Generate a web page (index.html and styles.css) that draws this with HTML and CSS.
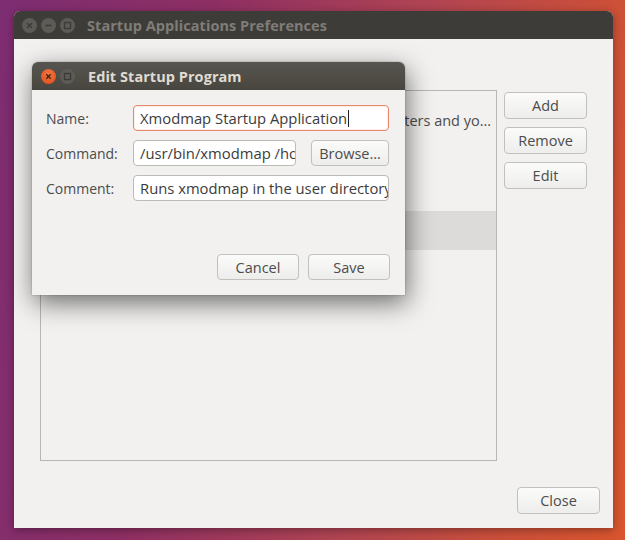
FILE: index.html
```html
<!DOCTYPE html>
<html>
<head>
<meta charset="utf-8">
<link rel="stylesheet" href="styles.css">
</head>
<body>
<div class="desktop">
  <div class="window main-win">
    <div class="titlebar">
      <div class="wbtns">
        <span class="wbtn inactive"><svg width="15" height="15" viewBox="0 0 15 15"><path d="M5 5 L10 10 M10 5 L5 10" stroke="#3b3a36" stroke-width="1.3"/></svg></span>
        <span class="wbtn inactive"><svg width="15" height="15" viewBox="0 0 15 15"><path d="M4.5 7.5 H10.5" stroke="#3b3a36" stroke-width="1.3"/></svg></span>
        <span class="wbtn inactive"><svg width="15" height="15" viewBox="0 0 15 15"><rect x="4.5" y="4.5" width="6" height="6" fill="none" stroke="#3b3a36" stroke-width="1.3"/></svg></span>
      </div>
      <div class="title inactive-title">Startup Applications Preferences</div>
    </div>
    <div class="main-body">
      <div class="top-area">
        <div class="list">
          <div class="row row-first"><span class="row-text">Runs xmodmap in the user directory to remap keyboard characters and yo…</span></div>
          <div class="row row-empty"></div>
          <div class="row row-selected"></div>
        </div>
        <div class="side-btns">
          <button class="btn side-btn">Add</button>
          <button class="btn side-btn">Remove</button>
          <button class="btn side-btn">Edit</button>
        </div>
      </div>
      <div class="bottom-area">
        <button class="btn close-btn">Close</button>
      </div>
    </div>
  </div>

  <div class="window dialog">
    <div class="titlebar dlg-titlebar">
      <div class="wbtns">
        <span class="wbtn close-active"><svg width="15" height="15" viewBox="0 0 15 15"><path d="M5.3 5.3 L9.7 9.7 M9.7 5.3 L5.3 9.7" stroke="#3b2116" stroke-width="1.3"/></svg></span>
        <span class="wbtn grey"><svg width="15" height="15" viewBox="0 0 15 15"><rect x="4.5" y="4.5" width="6" height="6" fill="none" stroke="#3b3a36" stroke-width="1.3"/></svg></span>
      </div>
      <div class="title active-title">Edit Startup Program</div>
    </div>
    <div class="dlg-body">
      <div class="form">
        <label class="lbl">Name:</label>
        <div class="entry focused">Xmodmap Startup Application<span class="caret"></span></div>
        <label class="lbl">Command:</label>
        <div class="cmd-row">
          <div class="entry cmd-entry">/usr/bin/xmodmap /home/user/.Xmodmap</div>
          <button class="btn browse-btn">Browse…</button>
        </div>
        <label class="lbl">Comment:</label>
        <div class="entry">Runs xmodmap in the user directory</div>
      </div>
      <div class="dlg-actions">
        <button class="btn act-btn">Cancel</button>
        <button class="btn act-btn">Save</button>
      </div>
    </div>
  </div>
</div>
</body>
</html>
```
FILE: styles.css
```css
* { box-sizing: border-box; }
html, body { margin: 0; padding: 0; }
body {
  width: 625px;
  height: 540px;
  overflow: hidden;
  font-family: "Open Sans", "Noto Sans", sans-serif;
  font-size: 14px;
  color: #4c4c4c;
}
.desktop {
  position: relative;
  width: 625px;
  height: 540px;
  background: linear-gradient(100deg, #7d2d72 0%, #8e2f64 30%, #b04452 60%, #cc5038 85%, #d9552e 100%);
}
.window {
  position: absolute;
  background: #f2f1f0;
  border-radius: 6px 6px 0 0;
  overflow: hidden;
}
.main-win {
  left: 14px;
  top: 11px;
  width: 599px;
  height: 517px;
  display: flex;
  flex-direction: column;
  box-shadow: 0 2px 8px rgba(0,0,0,0.35);
}
.titlebar {
  height: 28px;
  flex: none;
  background: #3d3c38;
  display: flex;
  align-items: center;
}
.wbtns {
  display: flex;
  gap: 4px;
  padding-left: 8px;
}
.wbtn {
  width: 15px;
  height: 15px;
  border-radius: 50%;
  display: block;
}
.wbtn svg { display: block; }
.wbtn.inactive, .wbtn.grey {
  background: #5c5b56;
}
.wbtn.close-active {
  background: radial-gradient(circle at 50% 35%, #f4763f, #dd4a1a);
}
.title {
  font-weight: 700;
  font-size: 14.5px;
  letter-spacing: 0.05px;
}
.inactive-title {
  color: #7f7d78;
  margin-left: 12px;
}
.active-title {
  color: #dfdbd2;
  margin-left: 13px;
}
.dlg-titlebar .wbtns { padding-left: 9px; }
.main-body {
  flex: 1;
  display: flex;
  flex-direction: column;
}
.top-area {
  display: flex;
  gap: 7px;
  padding: 51px 26px 0 26px;
}
.list {
  width: 457px;
  height: 371px;
  border: 1px solid #b8b6b2;
  background: #f2f1f0;
  display: flex;
  flex-direction: column;
}
.row {
  height: 60px;
  flex: none;
  display: flex;
  align-items: center;
  justify-content: flex-end;
  overflow: hidden;
  padding-right: 5px;
}
.row-first { height: 60px; padding-bottom: 2px; }
.row-empty { height: 60px; }
.row-selected {
  height: 39px;
  background: #dcdbd9;
}
.row-text {
  white-space: nowrap;
  color: #4c4c4c;
  font-size: 14.5px;
}
.side-btns {
  display: flex;
  flex-direction: column;
  gap: 8px;
  padding-top: 2px;
}
.btn {
  font-family: inherit;
  font-size: 14.5px;
  color: #4c4c4c;
  border: 1px solid #c2c0bc;
  border-radius: 4px;
  background: linear-gradient(#fbfbfa, #ededec);
  height: 27px;
  padding: 0;
  display: flex;
  align-items: center;
  justify-content: center;
}
.side-btn { width: 83px; }
.bottom-area {
  display: flex;
  justify-content: flex-end;
  padding: 26px 13px 0 0;
}
.close-btn { width: 83px; }

.dialog {
  left: 32px;
  top: 62px;
  width: 373px;
  height: 233px;
  display: flex;
  flex-direction: column;
  box-shadow: 2px 8px 26px rgba(0,0,0,0.55), 0 0 2px rgba(0,0,0,0.3);
  overflow: visible;
}
.dlg-titlebar {
  background: linear-gradient(#57554f, #48463f);
  border-radius: 6px 6px 0 0;
}
.dlg-body {
  flex: 1;
  display: flex;
  flex-direction: column;
  padding: 15px 15px 15px 14px;
}
.form {
  display: grid;
  grid-template-columns: 87px 256px;
  row-gap: 9px;
  align-items: center;
}
.lbl {
  color: #4c4c4c;
}
.entry {
  height: 26px;
  border: 1px solid #bdbbb7;
  border-radius: 4px;
  background: #ffffff;
  padding: 0 6px;
  line-height: 24px;
  white-space: nowrap;
  overflow: hidden;
  color: #3c3c3c;
  font-size: 14.8px;
}
.entry.focused {
  border-color: #e8876c;
  box-shadow: inset 0 0 0 1px rgba(240,140,110,0.15);
}
.caret {
  display: inline-block;
  width: 1px;
  height: 17px;
  background: #222;
  vertical-align: -3px;
  margin-left: 1px;
}
.cmd-row {
  display: flex;
  gap: 15px;
}
.cmd-entry { width: 163px; }
.browse-btn { width: 78px; height: 26px; }
.dlg-actions {
  margin-top: auto;
  display: flex;
  justify-content: flex-end;
  gap: 9px;
}
.act-btn { width: 82px; height: 26px; }
```
